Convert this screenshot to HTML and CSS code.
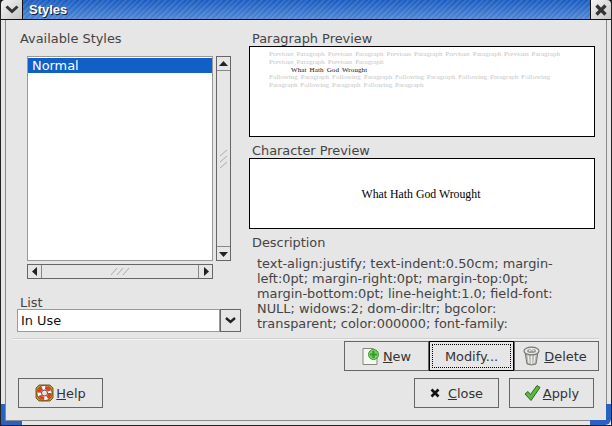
FILE: index.html
```html
<!DOCTYPE html>
<html lang="en">
<head>
<meta charset="utf-8">
<title>Styles</title>
<link rel="stylesheet" href="styles.css">
</head>
<body>
<div class="window">
  <header class="titlebar">
    <div class="menu-btn"><svg width="14" height="10" viewBox="0 0 14 10"><path d="M1.5 1.5 L7 6.5 L12.5 1.5" fill="none" stroke="#333" stroke-width="3"/></svg></div>
    <div class="title">Styles</div>
    <div class="close-btn"><svg width="12" height="12" viewBox="0 0 12 12"><path d="M1.5 1.5 L10.5 10.5 M10.5 1.5 L1.5 10.5" stroke="#333" stroke-width="3.2"/></svg></div>
  </header>
  <div class="frame">
    <div class="panes">
      <section class="left">
        <div class="label avail">Available Styles</div>
        <div class="list-row">
          <div class="list"><div class="sel">Normal</div></div>
          <div class="vscroll">
            <div class="arrow end-top"><svg width="9" height="6" viewBox="0 0 9 6"><path d="M4.5 0 L9 5 L0 5Z" fill="#222"/></svg></div>
            <div class="vtrack"><svg width="10" height="18" viewBox="0 0 10 18"><path d="M1 6 L8 0 M1 12 L8 6 M1 18 L8 12" stroke="#aaa" stroke-width="1"/></svg></div>
            <div class="arrow end-bottom"><svg width="9" height="6" viewBox="0 0 9 6"><path d="M4.5 6 L9 1 L0 1Z" fill="#222"/></svg></div>
          </div>
        </div>
        <div class="hscroll">
          <div class="arrow end-left"><svg width="6" height="9" viewBox="0 0 6 9"><path d="M0 4.5 L5 0 L5 9Z" fill="#222"/></svg></div>
          <div class="htrack"><svg width="18" height="8" viewBox="0 0 18 8"><path d="M0 7 L6 0 M6 7 L12 0 M12 7 L18 0" stroke="#aaa" stroke-width="1"/></svg></div>
          <div class="arrow end-right"><svg width="6" height="9" viewBox="0 0 6 9"><path d="M6 4.5 L1 0 L1 9Z" fill="#222"/></svg></div>
        </div>
        <div class="label list-label">List</div>
        <div class="combo">
          <div class="entry">In Use</div>
          <div class="combo-btn"><svg width="11" height="7" viewBox="0 0 11 7"><path d="M1 1 L5.5 5 L10 1" fill="none" stroke="#222" stroke-width="2.4"/></svg></div>
        </div>
      </section>
      <section class="right">
        <div class="label para-label">Paragraph Preview</div>
        <div class="preview para">
          <p class="ghost">Previous Paragraph Previous Paragraph Previous Paragraph Previous Paragraph Previous Paragraph</p>
          <p class="ghost">Previous Paragraph Previous Paragraph</p>
          <p class="current">What Hath God Wrought</p>
          <p class="ghost">Following Paragraph Following Paragraph Following Paragraph Following Paragraph Following</p>
          <p class="ghost">Paragraph Following Paragraph Following Paragraph</p>
        </div>
        <div class="label char-label">Character Preview</div>
        <div class="preview char">What Hath God Wrought</div>
        <div class="label desc-label">Description</div>
        <div class="desc">text-align:justify; text-indent:0.50cm; margin-<br>left:0pt; margin-right:0pt; margin-top:0pt;<br>margin-bottom:0pt; line-height:1.0; field-font:<br>NULL; widows:2; dom-dir:ltr; bgcolor:<br>transparent; color:000000; font-family:</div>
      </section>
    </div>
    <div class="sep"></div>
    <div class="row-manage">
      <button class="btn"><svg width="19" height="20" viewBox="0 0 19 20"><path d="M1 2.5 H11 L15 6 V18.5 H1Z" fill="#f6f6f2" stroke="#85857e"/><circle cx="11.5" cy="8.5" r="5" fill="#7fd268" stroke="#3a9434"/><path d="M11.5 5 V12 M8 8.5 H15" stroke="#2f9e2c" stroke-width="2.2"/></svg><span><u>N</u>ew</span></button>
      <button class="btn focus"><span class="focus-ring">Modify...</span></button>
      <button class="btn btn-delete"><svg width="17" height="20" viewBox="0 0 17 20"><path d="M2 6 L4 18 Q8.5 20 13 18 L15 6Z" fill="#b8b8b4" stroke="#77776f"/><path d="M5 8 L6 17 M8.5 8 V18 M12 8 L11 17" stroke="#eee" stroke-width="1.2"/><ellipse cx="8.5" cy="5" rx="7.5" ry="3.8" fill="#e8e8e4" stroke="#77776f" stroke-width="1.2"/><ellipse cx="8.5" cy="5" rx="4.5" ry="2" fill="#999"/><path d="M6 5 L9 3.5 L11 5" stroke="#fff" fill="none"/></svg><span><u>D</u>elete</span></button>
    </div>
    <div class="row-actions">
      <button class="btn"><svg width="19" height="18" viewBox="0 0 19 18"><path d="M1 4 L4 1 H15 L18 4 V14 L15 17 H4 L1 14Z" fill="#b59a2e" stroke="#6e5e20"/><circle cx="9.5" cy="9" r="7.6" fill="#fff" stroke="#7a2a10" stroke-width=".8"/><circle cx="9.5" cy="9" r="5.4" fill="none" stroke="#d9401c" stroke-width="3.4" stroke-dasharray="5.4 3.1"/><circle cx="9.5" cy="9" r="3" fill="#e6e6e6" stroke="#7a3a20"/></svg><span><u>H</u>elp</span></button>
      <div class="spacer"></div>
      <button class="btn btn-close"><svg width="10" height="10" viewBox="0 0 10 10"><path d="M1.5 1.5 L8.5 8.5 M8.5 1.5 L1.5 8.5" stroke="#111" stroke-width="2.6"/></svg><span class="close-text"><u>C</u>lose</span></button>
      <button class="btn"><svg width="17" height="18" viewBox="0 0 17 18"><path d="M1 10 L4 7.5 L6.5 10.5 L13 1.5 L16 3.5 L7 16.5Z" fill="#5cb83e" stroke="#2a6a1e" stroke-width="1"/></svg><span><u>A</u>pply</span></button>
    </div>
  </div>
  <div class="corner corner-l"></div>
  <div class="corner corner-r"></div>
</div>
</body>
</html>
```
FILE: styles.css
```css
* { box-sizing: border-box; }
html, body { margin: 0; padding: 0; }
body { width: 612px; height: 426px; overflow: hidden; font-family: "DejaVu Sans", sans-serif; font-size: 12.9px; color: #444; }
.window { position: relative; width: 612px; height: 426px; background: #e6e6e6; border-left: 1px solid #222; border-right: 1px solid #222; border-bottom: 1px solid #222; display: flex; flex-direction: column; padding: 0 4px 4px 4px; opacity: .999; }
.titlebar { margin: 0 -4px; height: 20px; flex: none; display: flex; background: #000; border-bottom: 1px solid #111; }
.menu-btn { width: 22px; height: 19px; background: linear-gradient(135deg, #f4f4f4, #c4c4c4); border-right: 1px solid #111; display: flex; align-items: center; justify-content: center; border-top-left-radius: 4px; }
.close-btn { width: 21px; height: 19px; background: linear-gradient(135deg, #f4f4f4, #c4c4c4); border-left: 1px solid #111; display: flex; align-items: center; justify-content: center; border-top-right-radius: 4px; }
.title { flex: 1; height: 19px; padding-left: 6px; font-family: "Liberation Sans", sans-serif; font-weight: bold; font-size: 13px; line-height: 20px; color: #fff; text-shadow: 1px 1px 0 #123; background: repeating-linear-gradient(135deg, rgba(255,255,255,.10) 0 2px, rgba(0,0,0,0) 2px 4px), linear-gradient(#1a5cc0, #4f86d6); }
.frame { flex: 1; border: 1px solid #8a8a8a; border-top: 0; display: flex; flex-direction: column; min-height: 0; }
.panes { display: flex; height: 318px; flex: none; }
.left { width: 243px; flex: none; }
.right { flex: 1; }
.label { line-height: 16px; color: #444; }
.avail { margin: 11px 0 0 14px; }
.list-row { display: flex; margin: 9px 0 0 21px; gap: 3px; height: 205px; }
.list { width: 186px; background: #fff; border: 1px solid #9a9a9a; padding: 1px 0 0; }
.sel { height: 15px; background: #1060c8; color: #fff; padding-left: 4px; line-height: 15px; }
.vscroll { width: 15px; display: flex; flex-direction: column; border: 1px solid #666; }
.arrow { display: flex; align-items: center; justify-content: center; flex: none; background: #e6e6e6; }
.end-top { height: 14px; border-bottom: 1px solid #888; }
.end-bottom { height: 14px; border-top: 1px solid #888; }
.vtrack { flex: 1; display: flex; align-items: center; justify-content: center; }
.hscroll { display: flex; width: 186px; height: 15px; margin: 3px 0 0 21px; border: 1px solid #666; }
.end-left { width: 14px; border-right: 1px solid #888; }
.end-right { width: 14px; border-left: 1px solid #888; }
.htrack { flex: 1; display: flex; align-items: center; justify-content: center; }
.list-label { margin: 16px 0 -2px 14px; }
.combo { display: flex; margin: 0 0 0 11px; width: 224px; height: 23px; }
.entry { flex: 1; background: #fff; border: 1px solid #9a9a9a; padding-left: 3px; line-height: 21px; color: #111; }
.combo-btn { width: 21px; border: 1px solid #666; display: flex; align-items: center; justify-content: center; }
.para-label { margin: 11px 0 -1px 3px; }
.preview { width: 346px; background: #fff; border: 1px solid #000; }
.para { height: 91px; padding: 4px 20px 0 19px; font-family: "Liberation Serif", serif; font-size: 7px; line-height: 7.75px; word-spacing: 1.2px; }
.para p { margin: 0; white-space: nowrap; }
.ghost { color: #c6c6c6; }
.current { color: #111; padding-left: 22px; letter-spacing: .1px; }
.char-label { margin: 6px 0 -1px 3px; }
.char { height: 71px; display: flex; align-items: center; justify-content: center; padding: 1px 2px 0 0; font-family: "Liberation Serif", serif; font-size: 11.8px; color: #000; }
.desc-label { margin: 6px 0 -1px 3px; }
.desc { margin: 6px 0 0 8px; line-height: 15px; color: #444; }
.sep { height: 2px; flex: none; margin: 0 7px 1px 7px; background: #d0d0d0; border-bottom: 1px solid #f4f4f4; }
.btn { width: 85px; height: 30px; background: #e6e6e6; border: 1px solid #666; display: flex; align-items: center; justify-content: center; gap: 2px; font-family: "DejaVu Sans", sans-serif; font-size: 12.9px; color: #333; padding: 0; flex: none; }
.btn-delete { gap: 4px; padding-right: 3px; }
.focus { border-color: #000; }
.focus-ring { display: flex; align-items: center; justify-content: center; width: 79px; height: 24px; border: 1px dotted #000; }
.close-text { margin-left: 6px; }
.row-manage { display: flex; justify-content: flex-end; margin: 0 7px 0 0; height: 30px; flex: none; }
.row-actions { display: flex; margin: 7px 12px 0 12px; gap: 10px; flex: none; }
.spacer { flex: 1; }
.corner { position: absolute; bottom: 0; width: 21px; height: 21px; }
.corner-l { left: 0; border-left: 4px solid #2a62c4; border-bottom: 4px solid #2a62c4; }
.corner-r { right: 0; border-right: 5px solid #2a62c4; border-bottom: 5px solid #2a62c4; border-bottom-right-radius: 6px; }
```
